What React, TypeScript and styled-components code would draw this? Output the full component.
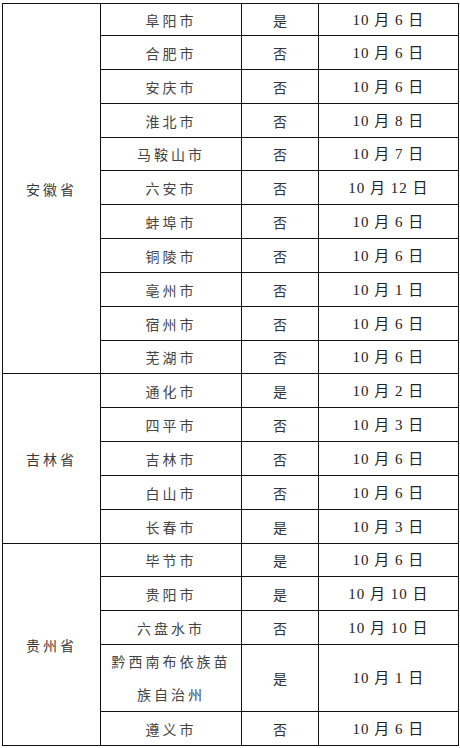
import React from 'react';
import styled, { createGlobalStyle } from 'styled-components';

interface City {
  name: string[];
  flag: string;
  date: string;
  h: number;
}

interface Province {
  name: string;
  cities: City[];
}

const GlobalStyle = createGlobalStyle`
  html, body {
    margin: 0;
    padding: 0;
    background: #fff;
  }
`;

const Page = styled.div`
  padding: 3px 2px 0 2px;
`;

const Table = styled.table`
  border-collapse: collapse;
  width: 456px;
  table-layout: fixed;
  font-family: "Noto Sans CJK SC", sans-serif;
`;

const Col = styled.col<{ $w: number }>`
  width: ${(p) => p.$w}px;
`;

const Row = styled.tr<{ $h: number }>`
  height: ${(p) => p.$h}px;
`;

const Cell = styled.td`
  border: 1px solid #111;
  padding: 0;
  text-align: center;
  vertical-align: middle;
  font-size: 14px;
  color: #444;
  letter-spacing: 3px;
  line-height: 20px;
`;

// the long autonomous prefecture name wraps onto two 33px lines
const Line = styled.div<{ $tall: boolean }>`
  line-height: ${(p) => (p.$tall ? '33px' : '20px')};
`;

const ProvCell = styled(Cell)`
  color: #3a3a3a;
`;

const FlagCell = styled(Cell)`
  color: #333;
  letter-spacing: 0;
`;

const DateCell = styled(Cell)`
  font-family: "Liberation Serif", "Noto Sans CJK SC", serif;
  font-size: 15px;
  color: #222;
  letter-spacing: 1px;
`;

const data: Province[] = [
  {
    name: '安徽省',
    cities: [
      { name: ['阜阳市'], flag: '是', date: '10 月 6 日', h: 32 },
      { name: ['合肥市'], flag: '否', date: '10 月 6 日', h: 34 },
      { name: ['安庆市'], flag: '否', date: '10 月 6 日', h: 34 },
      { name: ['淮北市'], flag: '否', date: '10 月 8 日', h: 34 },
      { name: ['马鞍山市'], flag: '否', date: '10 月 7 日', h: 33 },
      { name: ['六安市'], flag: '否', date: '10 月 12 日', h: 34 },
      { name: ['蚌埠市'], flag: '否', date: '10 月 6 日', h: 34 },
      { name: ['铜陵市'], flag: '否', date: '10 月 6 日', h: 34 },
      { name: ['亳州市'], flag: '否', date: '10 月 1 日', h: 34 },
      { name: ['宿州市'], flag: '否', date: '10 月 6 日', h: 34 },
      { name: ['芜湖市'], flag: '否', date: '10 月 6 日', h: 33 },
    ],
  },
  {
    name: '吉林省',
    cities: [
      { name: ['通化市'], flag: '是', date: '10 月 2 日', h: 34 },
      { name: ['四平市'], flag: '否', date: '10 月 3 日', h: 34 },
      { name: ['吉林市'], flag: '否', date: '10 月 6 日', h: 34 },
      { name: ['白山市'], flag: '否', date: '10 月 6 日', h: 34 },
      { name: ['长春市'], flag: '是', date: '10 月 3 日', h: 34 },
    ],
  },
  {
    name: '贵州省',
    cities: [
      { name: ['毕节市'], flag: '是', date: '10 月 6 日', h: 33 },
      { name: ['贵阳市'], flag: '是', date: '10 月 10 日', h: 34 },
      { name: ['六盘水市'], flag: '否', date: '10 月 10 日', h: 34 },
      { name: ['黔西南布依族苗', '族自治州'], flag: '是', date: '10 月 1 日', h: 67 },
      { name: ['遵义市'], flag: '否', date: '10 月 6 日', h: 34 },
    ],
  },
];

export default function App() {
  return (
    <Page>
      <GlobalStyle />
      <Table>
        <colgroup>
          <Col $w={98} />
          <Col $w={141} />
          <Col $w={77} />
          <Col $w={140} />
        </colgroup>
        <tbody>
          {data.map((prov) =>
            prov.cities.map((city, i) => (
              <Row key={prov.name + i} $h={city.h}>
                {i === 0 && <ProvCell rowSpan={prov.cities.length}>{prov.name}</ProvCell>}
                <Cell>
                  {city.name.map((line) => (
                    <Line key={line} $tall={city.name.length > 1}>
                      {line}
                    </Line>
                  ))}
                </Cell>
                <FlagCell>{city.flag}</FlagCell>
                <DateCell>{city.date}</DateCell>
              </Row>
            ))
          )}
        </tbody>
      </Table>
    </Page>
  );
}
